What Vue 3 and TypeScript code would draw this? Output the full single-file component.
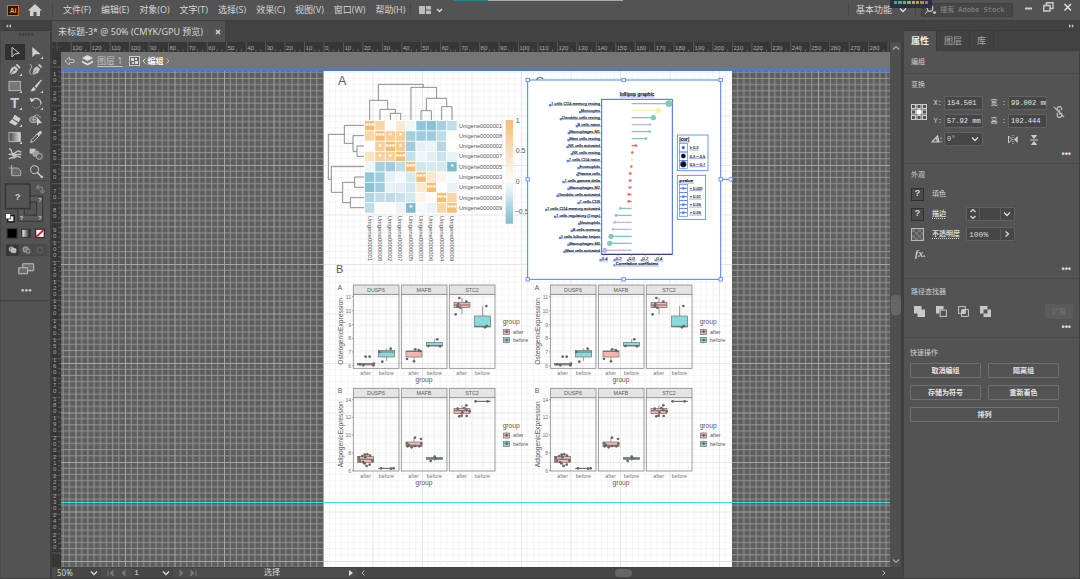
<script setup lang="ts">
import { ref } from 'vue'

const menus = ['文件(F)', '编辑(E)', '对象(O)', '文字(T)', '选择(S)', '效果(C)', '视图(V)', '窗口(W)', '帮助(H)']
const meterColors = ['#3fae8f', '#55b46a', '#6fb85a', '#93b552', '#b5ad4c', '#c99a48', '#cc7f45', '#c76247']
const STEP = 19.45

const hTicks = Array.from({ length: 43 }, (_, i) => ({ x: 324 + (i - 13) * STEP, label: i < 42 ? String(Math.abs(i - 13) * 10) : '' }))
const vTicks = Array.from({ length: 25 }, (_, i) => {
  const label = String((i + 1) * 10)
  const first = label.length === 3 ? 3 : 9
  return { y: 67 + i * STEP, digits: label.split('').map((d, k) => ({ d, dy: first + k * 6 })) }
})

const x = ref('154.501')
const y = ref('57.92 mm')
const w = ref('99.002 mm')
const h = ref('102.444')
const angle = ref('0°')
const opacity = ref('100%')
const stroke = ref('')
const zoomLevel = ref('50%')
const page = ref('1')

/* ---------- correlation heatmap ---------- */
const genes = ['1', '8', '2', '7', '5', '3', '6', '4', '9'].map((n) => 'Unigene000000' + n)
const corr = [
  [1, 0.62, 0.01, 0.35, -0.1, -0.85, -0.9, -0.68, -0.5],
  [0.62, 1, 0.75, 0.75, -0.72, -0.75, -0.75, -0.5, 0.04],
  [0.01, 0.75, 1, 0.78, -0.75, -0.2, -0.16, -0.58, 0.02],
  [0.4, 0.7, 0.72, 1, -0.45, -0.1, -0.22, -0.4, -0.18],
  [-0.12, -0.7, -0.75, -0.5, 1, -0.35, -0.32, -0.34, -1],
  [-0.85, -0.72, -0.2, -0.08, -0.32, 1, 0.36, 0.14, -0.06],
  [-0.9, -0.75, -0.18, -0.22, -0.34, 0.36, 1, 0.02, -0.18],
  [-0.6, -0.5, -0.52, -0.42, -0.34, 0.16, 0.04, 1, 0.62],
  [-0.5, 0.05, 0.03, -0.16, -1, -0.08, -0.16, 0.62, 1],
]
function heat(v: number): string {
  const t = Math.min(1, Math.abs(v))
  const end = v > 0 ? [244, 190, 118] : [126, 187, 208]
  return `rgb(${end.map((c) => Math.round(254 + (c - 254) * t)).join(',')})`
}
const cells = corr.flatMap((row, r) =>
  row.map((v, c) => ({
    x: 134 + c * 30.8,
    y: 167 + r * 30.8,
    fill: heat(v),
    stars: r === c ? '***' : v > 0.65 || v === -1 ? '*' : '',
  })),
)
const dendrogram =
  'M211 165V145H242V165M180 165V133H226V145M149 165V106H203V133M303 165V137H334V165M365 165V125H396V165M319 137V100H380V125M273 165V67H350V100M175 106V58H310V67' +
  'M132 243H111V274H132M132 212H99V259H111M132 181H73V235H99M132 336H104V367H132M132 398H91V428H132M104 352H68V413H91M132 305H34V382H68M73 208H25V343H34'

/* ---------- lollipop ---------- */
const T = '#7fcabb', Y = '#f5f1b0', P = '#bdb8dc', R = '#ee6a60'
const lollipops = (
  [
    ['T cells CD4 memory resting', 447, 10, T, 90],
    ['Monocytes', 415, 8, Y, 180],
    ['Dendritic cells resting', 400, 8, T, 122],
    ['B cells naive', 390, 4, P, 170],
    ['Macrophages M1', 389, 4, T, 146],
    ['Mast cells resting', 378, 4, T, 145],
    ['NK cells activated', 348, 4, R, 142],
    ['NK cells resting', 337, 4, R, 155],
    ['T cells CD4 naive', 337, 4, Y, 143],
    ['Eosinophils', 334, 4, R, 175],
    ['Plasma cells', 330, 4, R, 172],
    ['T cells gamma delta', 330, 4, R, 130],
    ['Macrophages M2', 329, 4, R, 145],
    ['Dendritic cells activated', 326, 4, R, 112],
    ['T cells CD8', 326, 4, R, 175],
    ['T cells CD4 memory activated', 301, 4, T, 78],
    ['T cells regulatory (Tregs)', 288, 4, T, 105],
    ['Neutrophils', 284, 4, P, 177],
    ['B cells memory', 279, 4, P, 155],
    ['T cells follicular helper', 273, 8, T, 120],
    ['Macrophages M0', 269, 8, T, 145],
    ['Mast cells activated', 254, 8, P, 133],
  ] as [string, number, number, string, number][]
).map(([name, end, r, color, start], i) => ({ name, end, r, color, start, y: 101 + i * 20.95 }))
const lolTicks = [['-0.4', 252], ['-0.2', 294], ['0.0', 335], ['0.2', 376], ['0.4', 418]] as [string, number][]
const corLegend = [['≥ 0.3', 233, 4], ['0.3 ~ 0.5', 258, 7], ['0.5 ~ 0.7', 283, 9]] as [string, number, number][]
const pLegend = [['< 0.001', 355], ['< 0.01', 380], ['< 0.05', 404], ['> 0.05', 428]] as [string, number][]
const handles = [[23, 30], [311, 30], [602, 30], [23, 328], [602, 328], [23, 628], [311, 628], [602, 628]]

/* ---------- box plots ---------- */
interface Box { x: number; y: number; h: number; med: number; hi: number; lo: number; g: 0 | 1 }
interface Chart { top: number; letter: string; title: string; strip: number; bottom: number; legend: number; ticks: [string, number][]; boxes: Box[]; dots: number[][] }
const charts: Chart[] = [
  {
    top: 260, letter: 'A', title: 'OsteogenicExpression', strip: 75, bottom: 325, legend: 186,
    ticks: [['11', 110], ['10', 152], ['9', 194], ['8', 235], ['7', 276], ['6', 317]],
    boxes: [
      { x: 98, y: 310, h: 5, med: 312, hi: 310, lo: 315, g: 0 },
      { x: 161, y: 271, h: 20, med: 276, hi: 265, lo: 303, g: 1 },
      { x: 243, y: 273, h: 18, med: 274, hi: 267, lo: 303, g: 0 },
      { x: 305, y: 247, h: 11, med: 257, hi: 238, lo: 258, g: 1 },
      { x: 387, y: 127, h: 16, med: 135, hi: 114, lo: 163, g: 0 },
      { x: 449, y: 168, h: 33, med: 199, hi: 138, lo: 202, g: 1 },
    ],
    dots: [[122, 290], [134, 290], [105, 313], [115, 316], [147, 311], [145, 316], [197, 266], [163, 276], [172, 305], [271, 268], [281, 270], [285, 273], [246, 297], [267, 304], [337, 238], [310, 258], [345, 259], [403, 114], [424, 125], [400, 132], [398, 139], [406, 143], [392, 163], [484, 138], [485, 198], [480, 202]],
  },
  {
    top: 380, letter: 'B', title: 'AdipogenicExpression', strip: 25, bottom: 273, legend: 137,
    ticks: [['14', 59], ['12', 112], ['10', 165], ['8', 219], ['6', 272]],
    boxes: [
      { x: 98, y: 229, h: 19, med: 238, hi: 223, lo: 258, g: 0 },
      { x: 161, y: 265, h: 1, med: 265, hi: 265, lo: 266, g: 1 },
      { x: 243, y: 186, h: 13, med: 196, hi: 173, lo: 202, g: 0 },
      { x: 305, y: 232, h: 7, med: 235, hi: 230, lo: 243, g: 1 },
      { x: 387, y: 85, h: 16, med: 92, hi: 76, lo: 109, g: 0 },
      { x: 449, y: 64, h: 1, med: 64, hi: 64, lo: 65, g: 1 },
    ],
    dots: [[119, 224], [127, 223], [135, 227], [102, 233], [112, 228], [121, 232], [104, 243], [114, 246], [134, 254], [125, 258], [142, 242], [118, 250], [168, 265], [198, 266], [206, 265], [270, 173], [288, 177], [246, 190], [252, 195], [248, 199], [260, 202], [270, 198], [283, 199], [289, 191], [329, 230], [317, 243], [332, 235], [424, 76], [398, 86], [418, 84], [424, 90], [434, 94], [412, 97], [403, 109], [410, 107], [425, 108], [452, 64], [488, 64]],
  },
]
const facets: [string, number][] = [['DUSP6', 85], ['MAFB', 229], ['STC2', 373]]
const fills = ['#f6b4b0', '#8adadc']

const quick = ['取消编组', '隔离组', '存储为符号', '重新着色', '排列']
</script>

<template>
  <div class="app">
    <header class="menubar">
      <span class="ai">Ai</span>
      <svg class="home" viewBox="0 0 14 13"><path d="M7 0L14 6.500H12V12H8.500V8H5.500V12H2V6.500H0Z" fill="#cfcfcf" /></svg>
      <i class="vr"></i>
      <nav class="menus"><button v-for="m in menus" :key="m" type="button">{{ m }}</button></nav>
      <i class="vr"></i>
      <button type="button" class="arrange" aria-label="排列文档">
        <svg width="24" height="9" viewBox="0 0 24 9"><path d="M0 0H6V8H0ZM7 0H12V3.500H7ZM7 4.500H12V8H7Z" fill="#bdbdbd" /><path d="M18 3L20.500 5.500L23 3" fill="none" stroke="#ddd" stroke-width="1.300" /></svg>
      </button>
      <span class="spacer"></span>
      <i class="vr"></i>
      <button type="button" class="workspace">基本功能
        <svg width="8" height="6" viewBox="0 0 8 6"><path d="M1 1.500L4 4.500L7 1.500" fill="none" stroke="#ddd" stroke-width="1.300" /></svg>
      </button>
      <i class="vr"></i>
      <label class="search">
        <svg width="13" height="10" viewBox="0 0 13 10"><circle cx="6" cy="3.500" r="2.800" fill="none" stroke="#c8c8c8" stroke-width="1.200" /><path d="M4 5.500L1 9M9 7L12 7L10.500 9Z" stroke="#c8c8c8" fill="#c8c8c8" /></svg>
        <input type="text" placeholder="搜索 Adobe Stock" aria-label="搜索 Adobe Stock" />
      </label>
      <div class="winctl">
        <button type="button" aria-label="最小化"><svg width="10" height="10" viewBox="0 0 10 10"><path d="M1 6.500H8" stroke="#ccc" stroke-width="2" /></svg></button>
        <button type="button" aria-label="还原"><svg width="11" height="10" viewBox="0 0 11 10"><path d="M3.500 3V.8H10V6.500H7.500M.8 3.500H7V9H.8Z" fill="none" stroke="#ccc" stroke-width="1.400" /></svg></button>
        <button type="button" aria-label="关闭"><svg width="10" height="10" viewBox="0 0 10 10"><path d="M1.500 2L8 8.500M8 2L1.500 8.500" stroke="#ddd" stroke-width="1.600" /></svg></button>
      </div>
      <div class="progress"><i></i></div>
      <div class="meter"><i v-for="c in meterColors" :key="c" :style="{ background: c }"></i></div>
    </header>

    <main class="work">
      <aside class="toolbar">
        <div class="collapse"><svg width="5" height="4" viewBox="0 0 7 5"><path d="M3 0V5L0 2.500ZM7 0V5L4 2.500Z" fill="#c8c8c8" /></svg></div>
        <div class="grip"></div>
        <div class="tools">
          <button type="button" class="on" aria-label="选择"><svg viewBox="0 0 42 42"><path d="M12 7V36L20 27L34 25Z" fill="none" stroke="#cfcfcf" stroke-width="3" /></svg></button>
          <button type="button" aria-label="直接选择"><svg viewBox="0 0 42 42"><path d="M10 6V37L19 28H35Z" fill="#cfcfcf" /><path class="c" d="M42 34V42H34Z" /></svg></button>
          <button type="button" aria-label="钢笔"><svg viewBox="0 0 42 42"><path d="M4 37L9 19L21 12L31 22L24 33L7 38L17 27" fill="#c6c6c6" /><path d="M23 9L27 5L38 16L34 20Z" fill="#c6c6c6" /><path d="M4 38L18 24" stroke="#535353" stroke-width="2" /><circle cx="19" cy="23" r="3" fill="#535353" /><path class="c" d="M42 34V42H34Z" /></svg></button>
          <button type="button" aria-label="曲率"><svg viewBox="0 0 42 42"><path d="M10 37L14 20L24 13L33 21L27 33L12 38" fill="#c6c6c6" /><path d="M27 10L31 5L40 14L36 18Z" fill="#c6c6c6" /><path d="M10 38L23 24" stroke="#535353" stroke-width="2" /><path d="M5 38C-1 28 4 22 7 17S7 8 2 7" fill="none" stroke="#c6c6c6" stroke-width="3" /></svg></button>
          <button type="button" aria-label="矩形"><svg viewBox="0 0 42 42"><rect x="3" y="7" width="34" height="28" fill="#777" stroke="#c4c4c4" stroke-width="2.500" /><path class="c" d="M42 34V42H34Z" /></svg></button>
          <button type="button" aria-label="画笔"><svg viewBox="0 0 42 42"><path d="M39 3L22 27L17 22L35 2Z" fill="#d0d0d0" /><path d="M15 24L20 29C19 38 8 38 3 36C10 34 8 26 15 24Z" fill="#d0d0d0" /><path class="c" d="M42 34V42H34Z" /></svg></button>
          <button type="button" aria-label="文字"><svg viewBox="0 0 42 42"><text x="20" y="36" text-anchor="middle" font-size="43" class="tt">T</text><path class="c" d="M42 34V42H34Z" /></svg></button>
          <button type="button" aria-label="旋转"><svg viewBox="0 0 42 42"><path d="M8 14C16 1 37 7 36 24" fill="none" stroke="#cfcfcf" stroke-width="3.500" /><path d="M35 24C33 38 16 41 9 30" fill="none" stroke="#bbb" stroke-width="2.500" stroke-dasharray="3 3" /><path d="M2 5L6 19L18 12Z" fill="#cfcfcf" /><path class="c" d="M42 34V42H34Z" /></svg></button>
          <button type="button" aria-label="橡皮擦"><svg viewBox="0 0 42 42"><path d="M20 5L38 17L32 28L14 17Z" fill="#cfcfcf" /><path d="M12 19L30 31L22 38L3 28Z" fill="#cfcfcf" /><path class="c" d="M42 34V42H34Z" /></svg></button>
          <button type="button" aria-label="形状生成器"><svg viewBox="0 0 42 42"><ellipse cx="14" cy="20" rx="12" ry="9" fill="#777" stroke="#c4c4c4" stroke-width="2.500" /><path d="M14 11C18 3 34 5 34 15" fill="none" stroke="#c4c4c4" stroke-width="2.500" /><path d="M8 20H20M14 14V26" stroke="#ccc" stroke-width="2" /><path d="M24 12V38L30 31L39 30Z" fill="#cfcfcf" /></svg></button>
          <button type="button" aria-label="渐变"><svg viewBox="0 0 42 42"><rect x="3" y="7" width="34" height="28" fill="url(#gr)" stroke="#c4c4c4" stroke-width="2.500" /><path class="c" d="M42 34V42H34Z" /></svg></button>
          <button type="button" aria-label="吸管"><svg viewBox="0 0 42 42"><path d="M5 37L8 29L24 12L30 18L13 35Z" fill="none" stroke="#c6c6c6" stroke-width="3" /><path d="M24 10L34 3C39 3 39 7 38 9L31 18Z" fill="#cfcfcf" /></svg></button>
          <button type="button" aria-label="操控变形"><svg viewBox="0 0 42 42"><path d="M3 5C14 6 8 19 15 21L28 13M2 23C9 16 14 29 22 24S34 26 40 21M3 36C10 27 17 37 22 30S34 31 39 32M28 13C34 8 35 20 40 13" fill="none" stroke="#c6c6c6" stroke-width="4" /><circle cx="18" cy="24" r="6" fill="#c6c6c6" /></svg></button>
          <button type="button" aria-label="混合"><svg viewBox="0 0 42 42"><rect x="2" y="5" width="17" height="15" fill="#c6c6c6" /><rect x="12" y="12" width="17" height="16" rx="5" fill="#999" stroke="#c0c0c0" stroke-width="2" /><circle cx="31" cy="28" r="9" fill="#5c5c5c" stroke="#c6c6c6" stroke-width="2.500" /></svg></button>
          <button type="button" aria-label="画板"><svg viewBox="0 0 42 42"><path d="M11 3V33M2 12H30L38 20V35H11V12" fill="#6a6a6a" stroke="#b8b8b8" stroke-width="2.500" /></svg></button>
          <button type="button" aria-label="缩放"><svg viewBox="0 0 42 42"><circle cx="17" cy="17" r="12" fill="none" stroke="#cfcfcf" stroke-width="3" /><path d="M26 26L38 39" stroke="#cfcfcf" stroke-width="4.500" /><path class="c" d="M42 34V42H34Z" /></svg></button>
        </div>
        <svg class="fillstroke" viewBox="0 0 150 376" role="img" aria-label="填色和描边">
          <defs>
            <linearGradient id="gr"><stop offset="0" stop-color="#444" /><stop offset="1" stop-color="#ddd" /></linearGradient>
            <linearGradient id="gw"><stop offset="0" stop-color="#fff" /><stop offset="1" stop-color="#111" /></linearGradient>
          </defs>
          <path d="M10 2H140" stroke="#484848" stroke-width="3" />
          <path d="M51 48H125V124H51ZM70 66V106H107V66Z" fill="#5a5a5a" fill-rule="evenodd" stroke="#343434" stroke-width="3" />
          <rect x="13" y="12" width="74" height="74" fill="#535353" stroke="#333" stroke-width="4" />
          <g class="q"><text x="50" y="59" font-size="27">?</text><text x="117" y="67" font-size="17">?</text><text x="61" y="121" font-size="17">?</text><text x="117" y="121" font-size="17">?</text></g>
          <path d="M107 22H124V38M114 15L107 22L114 29M117 32L124 39L131 32" fill="none" stroke="#808080" stroke-width="4" />
          <rect x="20" y="107" width="19" height="19" fill="#eee" stroke="#111" stroke-width="4" /><rect x="14" y="101" width="15" height="16" fill="#fff" stroke="#222" stroke-width="2" />
          <rect x="18" y="146" width="30" height="29" fill="#000" stroke="#3a3a3a" stroke-width="3" />
          <rect x="62" y="148" width="26" height="25" fill="url(#gw)" stroke="#3a3a3a" stroke-width="4" />
          <rect x="104" y="148" width="26" height="25" fill="#fff" stroke="#333" stroke-width="4" /><path d="M106 171L128 150" stroke="#e31b23" stroke-width="6" />
          <rect x="15" y="194" width="38" height="34" fill="#363636" /><rect x="56" y="194" width="80" height="34" fill="#4c4c4c" stroke="#474747" stroke-width="2" /><path d="M96 194V228" stroke="#474747" stroke-width="2" />
          <g stroke="#ccc" stroke-width="2"><circle cx="31" cy="208" r="7" fill="#888" /><rect x="31" y="206" width="14" height="13" rx="3" fill="#bbb" /><circle cx="74" cy="209" r="8" fill="#777" /><rect x="76" y="208" width="11" height="12" rx="4" fill="#555" /></g><circle cx="117" cy="211" r="8" fill="none" stroke="#646464" stroke-width="3" />
          <path d="M65 252H98V273H65Z" fill="#6d6d6d" stroke="#c2c2c2" stroke-width="3" /><path d="M53 264H80V282H53Z" fill="#6d6d6d" stroke="#c2c2c2" stroke-width="3" />
          <g fill="#c8c8c8"><circle cx="65" cy="332" r="4" /><circle cx="76" cy="332" r="4" /><circle cx="87" cy="332" r="4" /></g>
          <path d="M0 363H150" stroke="#444" stroke-width="3" />
        </svg>
      </aside>

      <section class="doc">
        <div class="doctabs"><div class="doctab"><span>未标题-3* @ 50% (CMYK/GPU 预览)</span><button type="button" aria-label="关闭文档"><svg width="6" height="6" viewBox="0 0 6 6"><path d="M1 1L5 5M5 1L1 5" stroke="#ddd" stroke-width="1.300" /></svg></button></div></div>
        <div class="stage">
          <svg class="vruler" viewBox="52 42 9 525" preserveAspectRatio="xMinYMin slice">
            <path d="M57 42V51M52 47H61" stroke="#777" stroke-width=".6" stroke-dasharray="1 1" />
            <text x="53" y="64" class="rul">0</text>
            <g v-for="t in vTicks" :key="t.y">
              <path :d="`M52 ${t.y}H61M58 ${t.y + 4.9}H61M58 ${t.y + 9.7}H61M58 ${t.y + 14.6}H61`" stroke="#686868" stroke-width=".7" />
              <text v-for="g in t.digits" :key="g.dy" x="53" :y="t.y + g.dy" class="rul">{{ g.d }}</text>
            </g>
            <path d="M52 553H61" stroke="#686868" stroke-width=".7" />
          </svg>
          <div class="view">
            <svg class="hruler" viewBox="61 42 829 10" preserveAspectRatio="xMinYMin slice">
              <g v-for="t in hTicks" :key="t.x">
                <path :d="`M${t.x} 42V52M${t.x + 4.9} 49V52M${t.x + 9.7} 49V52M${t.x + 14.6} 49V52`" stroke="#686868" stroke-width=".7" />
                <text v-if="t.label" :x="t.x + 1" y="50" class="rul">{{ t.label }}</text>
              </g>
            </svg>
            <div class="crumbs">
              <svg width="11" height="10" viewBox="0 0 11 10"><path d="M1 5L5.500 1V3.500H10V6.500H5.500V9Z" fill="none" stroke="#bbb" /></svg>
              <svg class="layers" width="11" height="11" viewBox="0 0 11 11"><path d="M5.500 0L11 3L5.500 6L0 3Z" fill="#ddd" /><path d="M0 5.500L5.500 8.500L11 5.500V7.500L5.500 10.500L0 7.500Z" fill="#ddd" /></svg>
              <a href="#">图层 1</a>
              <svg width="11" height="10" viewBox="0 0 11 10"><rect x=".5" y=".5" width="10" height="9" fill="#666" stroke="#ccc" /><path d="M2 2H5V5H2ZM6 5H9V8H6ZM6 2H8V4H6ZM3 6H5V8H3Z" fill="#ddd" /></svg>
              <span class="iso"><svg width="4" height="6" viewBox="0 0 4 6"><path d="M3.500 .5L1 3L3.500 5.500" fill="none" stroke="#ddd" /></svg><b>编组</b><svg width="4" height="6" viewBox="0 0 4 6"><path d="M.5 .5L3 3L.5 5.500" fill="none" stroke="#e0b0a0" /></svg></span>
            </div>
            <svg class="canvas" viewBox="61 71 829 496" preserveAspectRatio="xMinYMin slice">
              <defs>
                <pattern id="dark" x="323" y="66" width="49.500" height="49.500" patternUnits="userSpaceOnUse">
                  <path d="M6.200 0V50M12.400 0V50M18.600 0V50M24.800 0V50M30.900 0V50M37.100 0V50M43.300 0V50M0 6.200H50M0 12.400H50M0 18.600H50M0 24.800H50M0 30.900H50M0 37.100H50M0 43.300H50" stroke="#949494" />
                  <path d="M0 .5H50M.5 0V50" stroke="#a6a6a6" />
                </pattern>
                <pattern id="light" x="323" y="66" width="49.500" height="49.500" patternUnits="userSpaceOnUse">
                  <path d="M6.200 0V50M12.400 0V50M18.600 0V50M24.800 0V50M30.900 0V50M37.100 0V50M43.300 0V50M0 6.200H50M0 12.400H50M0 18.600H50M0 24.800H50M0 30.900H50M0 37.100H50M0 43.300H50" stroke="#f3f3f3" />
                  <path d="M0 .5H50M.5 0V50" stroke="#e6e6e6" />
                </pattern>
                <linearGradient id="bar" x2="0" y2="1"><stop offset="0" stop-color="#f4be76" /><stop offset=".59" stop-color="#fdfdfd" /><stop offset="1" stop-color="#7ebbd0" /></linearGradient>
              </defs>
              <rect x="61" y="70" width="829" height="497" fill="#5e5e5e" />
              <rect x="61" y="70" width="829" height="497" fill="url(#dark)" />
              <rect x="324" y="70" width="408" height="497" fill="#fff" />
              <rect x="324" y="70" width="408" height="497" fill="url(#light)" />

              <!-- heatmap -->
              <g transform="translate(320 65) scale(.33333)" class="art">
                <text x="66" y="61" font-size="37" text-anchor="middle">A</text>
                <path :d="dendrogram" fill="none" stroke="#777" stroke-width="2.500" />
                <g v-for="(c, i) in cells" :key="i">
                  <rect :x="c.x" :y="c.y" width="30.800" height="30.800" :fill="c.fill" stroke="#fff" stroke-width="2" />
                  <text v-if="c.stars" :x="c.x + 15.4" :y="c.y + 22" font-size="24" text-anchor="middle" class="star">{{ c.stars }}</text>
                </g>
                <text v-for="(g, i) in genes" :key="g" x="417" :y="188 + i * 30.8" font-size="17">{{ g }}</text>
                <text v-for="(g, i) in genes" :key="'c' + g" :transform="`translate(${143 + i * 30.8} 452) rotate(90)`" font-size="18">{{ g }}</text>
                <rect x="557" y="165" width="22" height="311" fill="url(#bar)" />
                <g font-size="21"><text x="587" y="174">1</text><text x="587" y="264">0.5</text><text x="587" y="356">0</text><text x="584" y="447">−0.5</text></g>
              </g>

              <!-- box plots -->
              <text x="336" y="273" font-size="11" class="art">B</text>
              <g v-for="dx in [0, 197]" :key="dx">
                <g v-for="ch in charts" :key="ch.letter" :transform="`translate(${325 + dx} ${ch.top}) scale(.33333)`" class="art">
                  <text x="45" :y="ch.strip + 14" font-size="20" text-anchor="middle">{{ ch.letter }}</text>
                  <text :transform="`translate(54 ${(ch.strip + 28 + ch.bottom) / 2}) rotate(-90)`" font-size="20" text-anchor="middle">{{ ch.title }}</text>
                  <g v-for="[t, ty] in ch.ticks" :key="t">
                    <text x="79" :y="ty + 6" font-size="16" text-anchor="end" class="dim">{{ t }}</text>
                    <path :d="`M81 ${ty}H85`" stroke="#777" stroke-width="2" />
                  </g>
                  <g v-for="[name, fx] in facets" :key="name">
                    <path v-for="[t, ty] in ch.ticks" :key="t" :d="`M${fx} ${ty}H${fx + 137}`" stroke="#ececec" stroke-width="2" />
                    <path :d="`M${fx + 37} ${ch.strip + 28}V${ch.bottom}M${fx + 99} ${ch.strip + 28}V${ch.bottom}`" stroke="#ececec" stroke-width="2" />
                    <rect :x="fx" :y="ch.strip + 28" width="137" :height="ch.bottom - ch.strip - 28" fill="none" stroke="#8c8c8c" stroke-width="2.500" />
                    <rect :x="fx" :y="ch.strip" width="137" height="28" fill="#e4e4e4" stroke="#8c8c8c" stroke-width="2.500" />
                    <text :x="fx + 68" :y="ch.strip + 20" font-size="16" text-anchor="middle">{{ name }}</text>
                    <text :x="fx + 37" :y="ch.bottom + 21" font-size="16" text-anchor="middle" class="dim">after</text>
                    <text :x="fx + 99" :y="ch.bottom + 21" font-size="16" text-anchor="middle" class="dim">before</text>
                  </g>
                  <text x="297" :y="ch.bottom + 41" font-size="20" text-anchor="middle">group</text>
                  <g v-for="b in ch.boxes" :key="b.x" stroke="#6d6d6d" stroke-width="2">
                    <path :d="`M${b.x + 24} ${b.hi}V${b.lo}`" />
                    <rect :x="b.x" :y="b.y" width="48" :height="b.h" :fill="fills[b.g]" />
                    <path :d="`M${b.x} ${b.med}H${b.x + 48}`" stroke-width="3" />
                  </g>
                  <circle v-for="(d, i) in ch.dots" :key="i" :cx="d[0]" :cy="d[1]" r="4" fill="#666" />
                  <text x="533" :y="ch.legend + 6" font-size="20">group</text>
                  <g v-for="k in [0, 1]" :key="k">
                    <path :d="`M545 ${ch.legend + 20 + k * 25}v19`" stroke="#666" stroke-width="2" />
                    <rect x="536" :y="ch.legend + 22 + k * 25" width="18" height="15" :fill="fills[k]" stroke="#6d6d6d" stroke-width="2" />
                    <path :d="`M536 ${ch.legend + 29 + k * 25}h18`" stroke="#666" stroke-width="2" />
                    <circle cx="545" :cy="ch.legend + 29 + k * 25" r="4" fill="#666" />
                    <text x="564" :y="ch.legend + 35 + k * 25" font-size="16">{{ k ? 'before' : 'after' }}</text>
                  </g>
                </g>
              </g>

              <!-- selected lollipop group -->
              <g transform="translate(520 70) scale(.33333)" class="lol">
                <text x="59" y="46" font-size="35" text-anchor="middle" class="letter">C</text>
                <rect x="23" y="30" width="579" height="598" fill="#fff" stroke="#4f80ff" stroke-width="3" />
                <text x="351" y="78" font-size="14" text-anchor="middle" class="bold">lollipop graphic</text>
                <path d="M300 81H402" class="u" />
                <rect x="245" y="88" width="212" height="465" fill="none" stroke="#4168d8" stroke-width="3" />
                <path d="M245 553H457" stroke="#23356f" stroke-width="3" />
                <g v-for="l in lollipops" :key="l.name">
                  <path :d="`M${l.start} ${l.y + 5}H246`" class="u" />
                  <text x="240" :y="l.y + 4" font-size="12" text-anchor="end">{{ l.name }}</text>
                  <rect :x="l.start - 3" :y="l.y + 1" width="7" height="7" fill="#4f80ff" />
                  <path :d="`M335 ${l.y}H${l.end}`" :stroke="l.color" stroke-width="4" />
                  <circle :cx="l.end" :cy="l.y" :r="l.r" :fill="l.color" />
                </g>
                <g v-for="[t, tx] in lolTicks" :key="t">
                  <path :d="`M${tx} 553v6M${tx - 9} 573H${tx + 12}`" class="u" />
                  <text :x="tx" y="571" font-size="13" text-anchor="middle">{{ t }}</text>
                  <rect :x="tx - 14" y="568" width="6" height="6" fill="#4f80ff" />
                </g>
                <path d="M286 588H416" class="u" /><rect x="280" y="583" width="6" height="6" fill="#4f80ff" />
                <text x="351" y="586" font-size="12" text-anchor="middle" class="bold">Correlation coefficient</text>
                <g fill="none" stroke="#4f80ff" stroke-width="2.500"><rect x="472" y="195" width="92" height="107" /><rect x="472" y="316" width="85" height="132" /></g>
                <path d="M476 216H506M476 339H522" class="u" />
                <text x="478" y="213" font-size="14" class="bold">|cor|</text>
                <text x="478" y="335" font-size="13" class="bold">pvalue</text>
                <g v-for="[t, ly, r] in corLegend" :key="t">
                  <rect x="478" :y="ly - 12" width="25" height="25" fill="none" stroke="#4f80ff" stroke-width="2" />
                  <circle cx="490" :cy="ly" :r="r" :fill="r === 4 ? '#2748c0' : '#070d22'" stroke="#4f80ff" />
                  <path :d="`M508 ${ly + 7}H${r === 4 ? 536 : 557}`" class="u" /><text x="509" :y="ly + 5" font-size="12">{{ t }}</text>
                </g>
                <g v-for="[t, ly] in pLegend" :key="t">
                  <rect x="478" :y="ly - 12" width="25" height="24" fill="none" stroke="#4f80ff" stroke-width="2" />
                  <path :d="`M480 ${ly}H501`" stroke="#4f80ff" stroke-width="3" /><circle cx="490" :cy="ly" r="4" fill="#4f80ff" />
                  <path :d="`M508 ${ly + 7}H545`" class="u" /><text x="509" :y="ly + 5" font-size="12">{{ t }}</text>
                </g>
                <path d="M602 328H626" stroke="#4f80ff" stroke-width="3" />
                <g fill="#fff" stroke="#4f80ff" stroke-width="2.500">
                  <circle cx="632" cy="328" r="6" />
                  <rect v-for="(p, i) in handles" :key="i" :x="p[0] - 5" :y="p[1] - 5" width="10" height="10" />
                </g>
              </g>
              <path d="M61 502.500H890" stroke="#39e0e2" />
            </svg>
          </div>
          <div class="vscroll">
            <svg width="8" height="6" viewBox="0 0 8 6"><path d="M1 4.500L4 1.500L7 4.500" fill="none" stroke="#aaa" stroke-width="1.200" /></svg>
            <i></i>
            <svg width="8" height="6" viewBox="0 0 8 6"><path d="M1 1.500L4 4.500L7 1.500" fill="none" stroke="#aaa" stroke-width="1.200" /></svg>
          </div>
        </div>
        <footer class="status">
          <span class="combo zoombox"><select v-model="zoomLevel" aria-label="缩放级别"><option>50%</option></select><svg width="8" height="6" viewBox="0 0 8 6"><path d="M1 1.500L4 4.500L7 1.500" fill="none" stroke="#ddd" stroke-width="1.300" /></svg></span>
          <svg class="nav" width="20" height="8" viewBox="0 0 20 8"><path d="M1 1V7M6 1L3 4L6 7ZM18 1L15 4L18 7Z" stroke="#757575" fill="#757575" /></svg>
          <span class="combo pagebox"><select v-model="page" aria-label="画板导航"><option>1</option></select><svg width="8" height="6" viewBox="0 0 8 6"><path d="M1 1.500L4 4.500L7 1.500" fill="none" stroke="#ddd" stroke-width="1.300" /></svg></span>
          <svg class="nav" width="20" height="8" viewBox="0 0 20 8"><path d="M1 1L4 4L1 7ZM12 1L15 4L12 7ZM17 1V7" stroke="#757575" fill="#757575" /></svg>
          <span class="toolname">选择</span>
          <svg class="play" width="6" height="8" viewBox="0 0 6 8"><path d="M1 1L5 4L1 7Z" fill="#ddd" /></svg>
          <span class="hscroll"><svg width="4" height="6" viewBox="0 0 4 6"><path d="M3.500 .5L1 3L3.500 5.500" fill="none" stroke="#bbb" /></svg><i></i><svg width="4" height="6" viewBox="0 0 4 6"><path d="M.5 .5L3 3L.5 5.500" fill="none" stroke="#bbb" /></svg></span>
        </footer>
      </section>

      <aside class="panel">
        <div class="collapse end"><svg width="5" height="4" viewBox="0 0 7 5"><path d="M0 0V5L3 2.500ZM4 0V5L7 2.500Z" fill="#c8c8c8" /></svg></div>
        <div class="ptabs" role="tablist"><button type="button" role="tab" aria-selected="true" class="active">属性</button><button type="button" role="tab">图层</button><button type="button" role="tab">库</button></div>
        <section class="sec kind"><h3>编组</h3></section>
        <section class="sec">
          <h3>变换</h3>
          <div class="transform">
            <svg class="refpt" width="16" height="16" viewBox="0 0 16 16"><path d="M1 1H15V15H1ZM1 8H15M8 1V15" fill="none" stroke="#aaa" /><g fill="#535353" stroke="#d0d0d0"><rect x=".5" y=".5" width="4" height="4" /><rect x="6" y=".5" width="4" height="4" /><rect x="11.500" y=".5" width="4" height="4" /><rect x=".5" y="6" width="4" height="4" /><rect x="11.500" y="6" width="4" height="4" /><rect x=".5" y="11.500" width="4" height="4" /><rect x="6" y="11.500" width="4" height="4" /><rect x="11.500" y="11.500" width="4" height="4" /></g><rect x="5.500" y="5.500" width="5" height="5" fill="#fff" /></svg>
            <label for="fx">X:</label><input id="fx" v-model="x" type="text" />
            <label for="fw">宽 :</label><input id="fw" v-model="w" type="text" />
            <svg class="link" width="12" height="14" viewBox="0 0 14 16"><path d="M5 6V4C5 1 10 1 10 4V6M5 9V12C5 15 10 15 10 12V9M7.500 5V11" fill="none" stroke="#c4c4c4" stroke-width="1.400" /><path d="M1 2L13 14" stroke="#c4c4c4" stroke-width="1.200" /></svg>
            <label for="fy">Y:</label><input id="fy" v-model="y" type="text" />
            <label for="fh">高 :</label><input id="fh" v-model="h" type="text" />
            <label for="fa" aria-label="旋转"><svg width="11" height="9" viewBox="0 0 11 9"><path d="M6.500 1L1 7H8ZM5 3C6 4 6.500 5.500 6.500 7" fill="none" stroke="#ccc" stroke-width="1.200" /><path d="M10 2.500V4M10 6V7.500" stroke="#ccc" /></svg></label>
            <span class="combo"><select id="fa" v-model="angle"><option>0°</option></select><svg width="8" height="6" viewBox="0 0 8 6"><path d="M1 1.500L4 4.500L7 1.500" fill="none" stroke="#ddd" stroke-width="1.300" /></svg></span>
            <span class="flips">
              <button type="button" aria-label="水平翻转"><svg width="10" height="9" viewBox="0 0 10 9"><path d="M5 0V9" stroke="#ccc" stroke-dasharray="1 1" /><path d="M.5 1V8L4 4.500Z" fill="none" stroke="#ccc" /><path d="M9.700 1V8L6 4.500Z" fill="#ccc" /></svg></button>
              <button type="button" aria-label="垂直翻转"><svg width="8" height="10" viewBox="0 0 8 10"><path d="M0 5H8" stroke="#ccc" /><path d="M1.500 .5H6.500L4 3.500Z" fill="#ccc" stroke="#ccc" /><path d="M1.500 9.500H6.500L4 6.500Z" fill="#ccc" stroke="#ccc" /></svg></button>
            </span>
          </div>
          <button type="button" class="more" aria-label="更多变换选项">•••</button>
        </section>
        <section class="sec">
          <h3>外观</h3>
          <div class="looks">
            <button type="button" class="sw">?</button><span>填色</span><i></i>
            <button type="button" class="sw">?</button><label for="fs" class="ul">描边</label>
            <span class="combo wide"><svg class="spin" width="8" height="12" viewBox="0 0 8 12"><path d="M1.500 4L4 1.500L6.500 4M1.500 8L4 10.500L6.500 8" fill="none" stroke="#ddd" stroke-width="1.200" /></svg><select id="fs" v-model="stroke"><option value=""></option></select><svg width="8" height="6" viewBox="0 0 8 6"><path d="M1 1.500L4 4.500L7 1.500" fill="none" stroke="#ddd" stroke-width="1.300" /></svg></span>
            <button type="button" class="sw checker" aria-label="不透明度蒙版"></button><label for="fo" class="ul">不透明度</label>
            <span class="combo wide op"><input id="fo" v-model="opacity" type="text" /><svg width="8" height="6" viewBox="0 0 8 6"><path d="M2.500 .5L5.500 3L2.500 5.500" fill="none" stroke="#ddd" stroke-width="1.300" /></svg></span>
            <button type="button" class="fx">fx.</button>
          </div>
          <button type="button" class="more" aria-label="更多外观选项">•••</button>
        </section>
        <section class="sec path">
          <h3>路径查找器</h3>
          <div class="finder">
            <button type="button" aria-label="联集"><svg width="11" height="11" viewBox="0 0 11 11"><path d="M0 0H7.500V3.500H11V11H3.500V7.500H0Z" fill="#c8c8c8" /></svg></button>
            <button type="button" aria-label="减去顶层"><svg width="11" height="11" viewBox="0 0 11 11"><path d="M0 0H7.500V3.500H3.500V7.500H0Z" fill="#c8c8c8" /><rect x="4.100" y="4.100" width="6.300" height="6.300" fill="#535353" stroke="#c8c8c8" /></svg></button>
            <button type="button" aria-label="交集"><svg width="11" height="11" viewBox="0 0 11 11"><path d="M.6 .6H7.400V7.400H.6ZM3.600 3.600H10.400V10.400H3.600Z" fill="none" stroke="#c8c8c8" /><rect x="4" y="4" width="3.500" height="3.500" fill="#c8c8c8" /></svg></button>
            <button type="button" aria-label="差集"><svg width="11" height="11" viewBox="0 0 11 11"><path d="M0 0H7.500V3.500H11V11H3.500V7.500H0ZM3.500 3.500V7.500H7.500V3.500Z" fill="#c8c8c8" fill-rule="evenodd" /></svg></button>
            <button type="button" class="expand" disabled>扩展</button>
          </div>
          <button type="button" class="more" aria-label="更多路径查找器选项">•••</button>
        </section>
        <section class="sec last">
          <h3>快速操作</h3>
          <div class="quick"><button v-for="q in quick" :key="q" type="button">{{ q }}</button></div>
        </section>
      </aside>
    </main>
  </div>
</template>

<style>
body { margin: 0; background: #535353; }
</style>

<style scoped>
* { box-sizing: border-box; }
.app { height: 100vh; display: flex; flex-direction: column; background: #535353; color: #d6d6d6; font: 9px/12px "Noto Sans", "Noto Sans CJK SC", sans-serif; border-bottom: 1px solid #3f3f3f; overflow: hidden; }
button, input, select { font: inherit; color: inherit; background: none; border: 0; padding: 0; margin: 0; min-width: 0; border-radius: 0; outline: 0; }
button { white-space: nowrap; }
svg { display: block; flex: none; }
h3 { margin: 0; font-size: 7px; line-height: 10px; font-weight: 400; color: #d0d0d0; }
.vr { width: 1px; height: 14px; background: #474747; flex: none; }

.menubar { position: relative; height: 21px; flex: none; display: flex; align-items: center; border-bottom: 1px solid #3f3f3f; padding-left: 7px; }
.ai { width: 12px; height: 11px; border: 1px solid #d0761c; background: #2b1503; color: #ff9a2e; font: bold 7px/9px "Liberation Sans", sans-serif; text-align: center; }
.home { width: 14px; height: 13px; margin: 0 10px 0 9px; }
.menus { display: flex; gap: 10px; margin: 0 5px 0 10px; font-family: "Open Sans", "Noto Sans CJK SC", sans-serif; }
.arrange { margin-left: 8px; }
.spacer { flex: 1; }
.workspace { display: flex; align-items: center; gap: 7px; margin: 0 8px 0 7px; }
.search { display: flex; align-items: center; gap: 3px; width: 92px; height: 14px; margin-left: 5px; padding-left: 2px; background: #464646; border: 1px solid #404040; }
.search input { width: 72px; font: 7px/12px "DejaVu Sans Mono", "Noto Sans CJK SC", monospace; }
.search input::placeholder { color: #8c8c8c; opacity: 1; }
.winctl { display: flex; gap: 9px; margin: 0 7px 7px 11px; }
.progress { position: absolute; left: 42%; top: 0; width: 169px; height: 1px; background: #a9a9a9; }
.progress i { display: block; width: 34px; height: 1px; background: #1d8a90; }
.meter { position: absolute; right: 148px; top: 0; width: 42px; height: 8px; padding: 1px 4px; display: flex; gap: 1px; background: #2b3040; }
.meter i { flex: 1; height: 3px; }

.work { flex: 1; min-height: 0; display: grid; grid-template-columns: 52px minmax(0, 1fr) 177px; }
.collapse { height: 10px; background: #424242; border-bottom: 1px solid #3c3c3c; padding: 3px 5px 2px; display: flex; }
.end { justify-content: flex-end; }
.toolbar { border-right: 2px solid #3d3d3d; border-left: 1px solid #484848; overflow: hidden; }
.grip { width: 14px; height: 3px; margin: 2px auto 8px; background: repeating-linear-gradient(90deg, #414141 0 2px, #535353 2px 3px); }
.tools { display: grid; grid-template-columns: 20px 20px; column-gap: 1px; row-gap: 1px; padding-left: 4px; }
.tools button { height: 16px; display: grid; place-items: center; }
.tools .on { background: #303030; }
.tools svg { width: 14px; height: 14px; }
.c { fill: #c8c8c8; }
.tt { font-family: "Liberation Sans", sans-serif; font-weight: bold; fill: #cfcfcf; }
.fillstroke { width: 50px; height: 125px; margin-top: 1px; }
.q { fill: #cfcfcf; font-family: "Liberation Mono", monospace; font-weight: bold; text-anchor: middle; }

.doc { display: flex; flex-direction: column; min-height: 0; min-width: 0; }
.doctabs { height: 21px; flex: none; background: #424242; display: flex; }
.doctab { background: #535353; display: flex; align-items: center; gap: 12px; padding: 0 4px 0 6px; }
.doctab span { white-space: nowrap; }
.stage { flex: 1; min-height: 0; display: grid; grid-template-columns: 9px minmax(0, 1fr) 13px; }
.vruler { width: 100%; height: 100%; min-height: 0; background: #363636; overflow: hidden; }
.rul { font: 6px "Liberation Sans", sans-serif; fill: #ababab; }
.view { display: flex; flex-direction: column; min-height: 0; }
.hruler { width: 100%; height: 10px; background: #363636; }
.crumbs { height: 19px; flex: none; background: #757575; border-bottom: 2px solid #4878e8; display: flex; align-items: center; padding-left: 3px; gap: 6px; color: #c9c9c9; }
.crumbs a { color: #c4c4c4; text-underline-offset: 2px; margin-left: -2px; }
.crumbs .layers { margin-left: 1px; }
.iso { display: flex; align-items: center; gap: 2px; margin-left: -4px; color: #fff; font-size: 8px; }
.canvas { width: 100%; flex: 1; min-height: 0; }
.vscroll { background: #4f4f4f; border-right: 2px solid #404040; display: flex; flex-direction: column; align-items: center; justify-content: space-between; padding: 3px 0; }
.vscroll i { width: 10px; height: 20px; border-radius: 4px; background: #666; }
.art { font-family: "Liberation Sans", sans-serif; fill: #5a5a5a; }
.dim { fill: #7a7a7a; }
.star { fill: #fff; font-weight: bold; }
.lol { font-family: "Liberation Sans", sans-serif; fill: #111522; }
.lol text { stroke: #111522; stroke-width: .4; }
.lol .letter { fill: #5a5a5a; stroke: none; }
.bold { font-weight: bold; }
.u { fill: none; stroke: #4f80ff; stroke-width: 2; }

.status { height: 11px; flex: none; display: flex; align-items: center; background: #4d4d4d; border-top: 1px solid #444; font: 8px/10px "Liberation Mono", "Noto Sans CJK SC", monospace; }
.combo { position: relative; display: flex; align-items: center; height: 14px; border: 1px solid #626262; background: #464646; border-radius: 1px; }
.combo select, .combo input { appearance: none; flex: 1; width: 100%; padding-left: 2px; height: 12px; }
.combo > svg:last-child { position: absolute; right: 3px; pointer-events: none; }
.status .combo { height: 10px; border: 0; }
.status .combo select { height: 10px; padding-left: 1px; }
.zoombox { width: 45px; margin-left: 4px; }
.zoombox select { font-family: "Noto Sans", sans-serif; }
.nav { margin: 0 6px; }
.pagebox { width: 40px; }
.toolname { width: 140px; text-align: center; margin-left: -3px; }
.play { margin-left: 6px; }
.hscroll { flex: 1; display: flex; align-items: center; justify-content: space-between; margin-left: 3px; padding: 0 17px 0 4px; height: 10px; background: #464646; }
.hscroll i { width: 17px; height: 8px; border-radius: 4px; background: #666; }

.panel { min-width: 0; border-left: 1px solid #404040; border-right: 1px solid #404040; font: 7px/10px "Liberation Mono", "Noto Sans CJK SC", monospace; }
.ptabs { height: 20px; background: #424242; display: flex; border-bottom: 1px solid #3e3e3e; font: 9px/12px "Noto Sans CJK SC", sans-serif; }
.ptabs button { padding: 0 7px; border-right: 1px solid #3a3a3a; color: #a8a8a8; }
.ptabs .active { background: #535353; color: #eee; font-weight: bold; height: 20px; }
.sec { padding: 6px 6px 5px 7px; border-bottom: 1px solid #484848; display: flex; flex-direction: column; }
.sec.kind { padding: 6px 7px; }
.transform { display: grid; grid-template-columns: 20px 13px 39px 25px 39px 1fr; grid-auto-rows: 14px; row-gap: 4px; margin-top: 6px; align-items: center; }
.refpt { grid-row: 1 / 3; }
.link { grid-row: 1 / 3; grid-column: 6; margin-left: 6px; }
.transform label { padding-right: 2px; white-space: nowrap; display: flex; justify-content: flex-end; }
.transform > input { height: 14px; width: 100%; border: 1px solid #626262; background: #464646; padding-left: 2px; border-radius: 1px; color: #e6e6e6; }
label[for="fx"], label[for="fy"], label[for="fa"] { grid-column: 2; }
.flips { grid-column: 5; display: flex; gap: 12px; padding-top: 1px; }
.more { align-self: flex-end; height: 8px; margin: 4px 2px 0 0; font: bold 9px/8px "Liberation Sans", sans-serif; color: #ddd; }
.looks { display: grid; grid-template-columns: 13px 35px 50px; column-gap: 0; grid-auto-rows: 14px; row-gap: 6px; margin-top: 7px; align-items: center; }
.looks > span:not(.combo), .looks > label { padding-left: 8px; white-space: nowrap; }
.sw { width: 13px; height: 13px; border: 1px solid #2f2f2f; background: #4a4a4a; font-weight: bold; font-size: 9px; }
.checker { border-color: #bbb; background: repeating-conic-gradient(#5c5c5c 0 25%, #777 0 50%) 0 0 / 6px 6px; }
.ul { font-weight: bold; text-decoration: underline dotted; text-underline-offset: 2px; }
.wide { margin-left: 7px; width: 49px; font-size: 8px; }
.spin { margin: 0 2px; }
.wide select { border-left: 1px solid #5a5a5a; border-right: 1px solid #5a5a5a; margin-right: 13px; }
.wide input { border-right: 1px solid #5a5a5a; margin-right: 13px; }
.fx { font: italic bold 10px/12px "Liberation Serif", serif; color: #ccc; text-align: left; padding-left: 4px; }
.finder { display: flex; gap: 11px; align-items: center; margin: 7px 0 0 3px; }
.expand { margin-left: auto; width: 28px; height: 15px; background: #5b5b5b; color: #757575; }
.path { padding-top: 8px; padding-bottom: 6px; }
.last { border: 0; padding: 10px 20px 0 6px; }
.quick { display: grid; grid-template-columns: 1fr 1fr; gap: 7px; margin-top: 5px; }
.quick button { height: 15px; border: 1px solid #6f6f6f; border-radius: 1px; font-weight: bold; color: #e6e6e6; }
.quick button:last-child { grid-column: 1 / 3; }
</style>
